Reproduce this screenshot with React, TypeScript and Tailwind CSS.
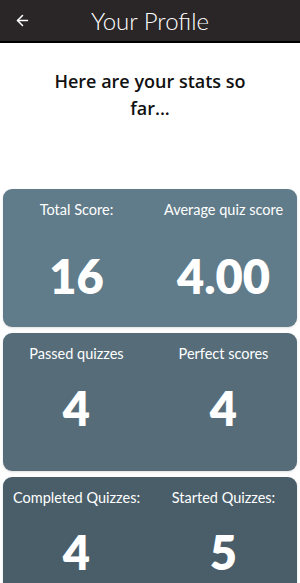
import { ArrowLeft } from "lucide-react";

type Stat = { label: string; value: string };

const rows: { bg: string; stats: [Stat, Stat]; numTop: string }[] = [
  {
    bg: "bg-[#607b89]",
    stats: [
      { label: "Total Score:", value: "16" },
      { label: "Average quiz score", value: "4.00" },
    ],
    numTop: "mt-[34px]",
  },
  {
    bg: "bg-[#566d79]",
    stats: [
      { label: "Passed quizzes", value: "4" },
      { label: "Perfect scores", value: "4" },
    ],
    numTop: "mt-[22px]",
  },
  {
    bg: "bg-[#4a5e69]",
    stats: [
      { label: "Completed Quizzes:", value: "4" },
      { label: "Started Quizzes:", value: "5" },
    ],
    numTop: "mt-[22px]",
  },
];

export default function App() {
  return (
    <div className="w-[300px] h-[583px] overflow-hidden bg-white" style={{ fontFamily: "Lato, sans-serif" }}>
      <header className="h-[43px] bg-[#2a2627] border-b-2 border-black flex items-center relative">
        <ArrowLeft className="absolute left-[14px] w-[17px] h-[17px] text-white" strokeWidth={2.2} />
        <h1 className="w-full text-center text-white text-[24px] font-light leading-none">
          Your Profile
        </h1>
      </header>

      <p
        className="mt-[25px] mx-auto w-[215px] text-center text-[18px] font-semibold leading-[27px] text-[#111]"
        style={{ fontFamily: "'Open Sans', sans-serif" }}
      >
        Here are your stats so far...
      </p>

      <div className="mt-[67px] px-[3px] flex flex-col gap-[6px]">
        {rows.map((r, i) => (
          <div key={i} className={`${r.bg} h-[138px] rounded-[9px] grid grid-cols-2 shadow-sm`}>
            {r.stats.map((s) => (
              <div key={s.label} className="flex flex-col items-center pt-[12px] text-white">
                <span className="text-[14.5px] leading-[18px]">{s.label}</span>
                <span className={`${r.numTop} text-[47px] font-extrabold leading-none`}>{s.value}</span>
              </div>
            ))}
          </div>
        ))}
      </div>
    </div>
  );
}
